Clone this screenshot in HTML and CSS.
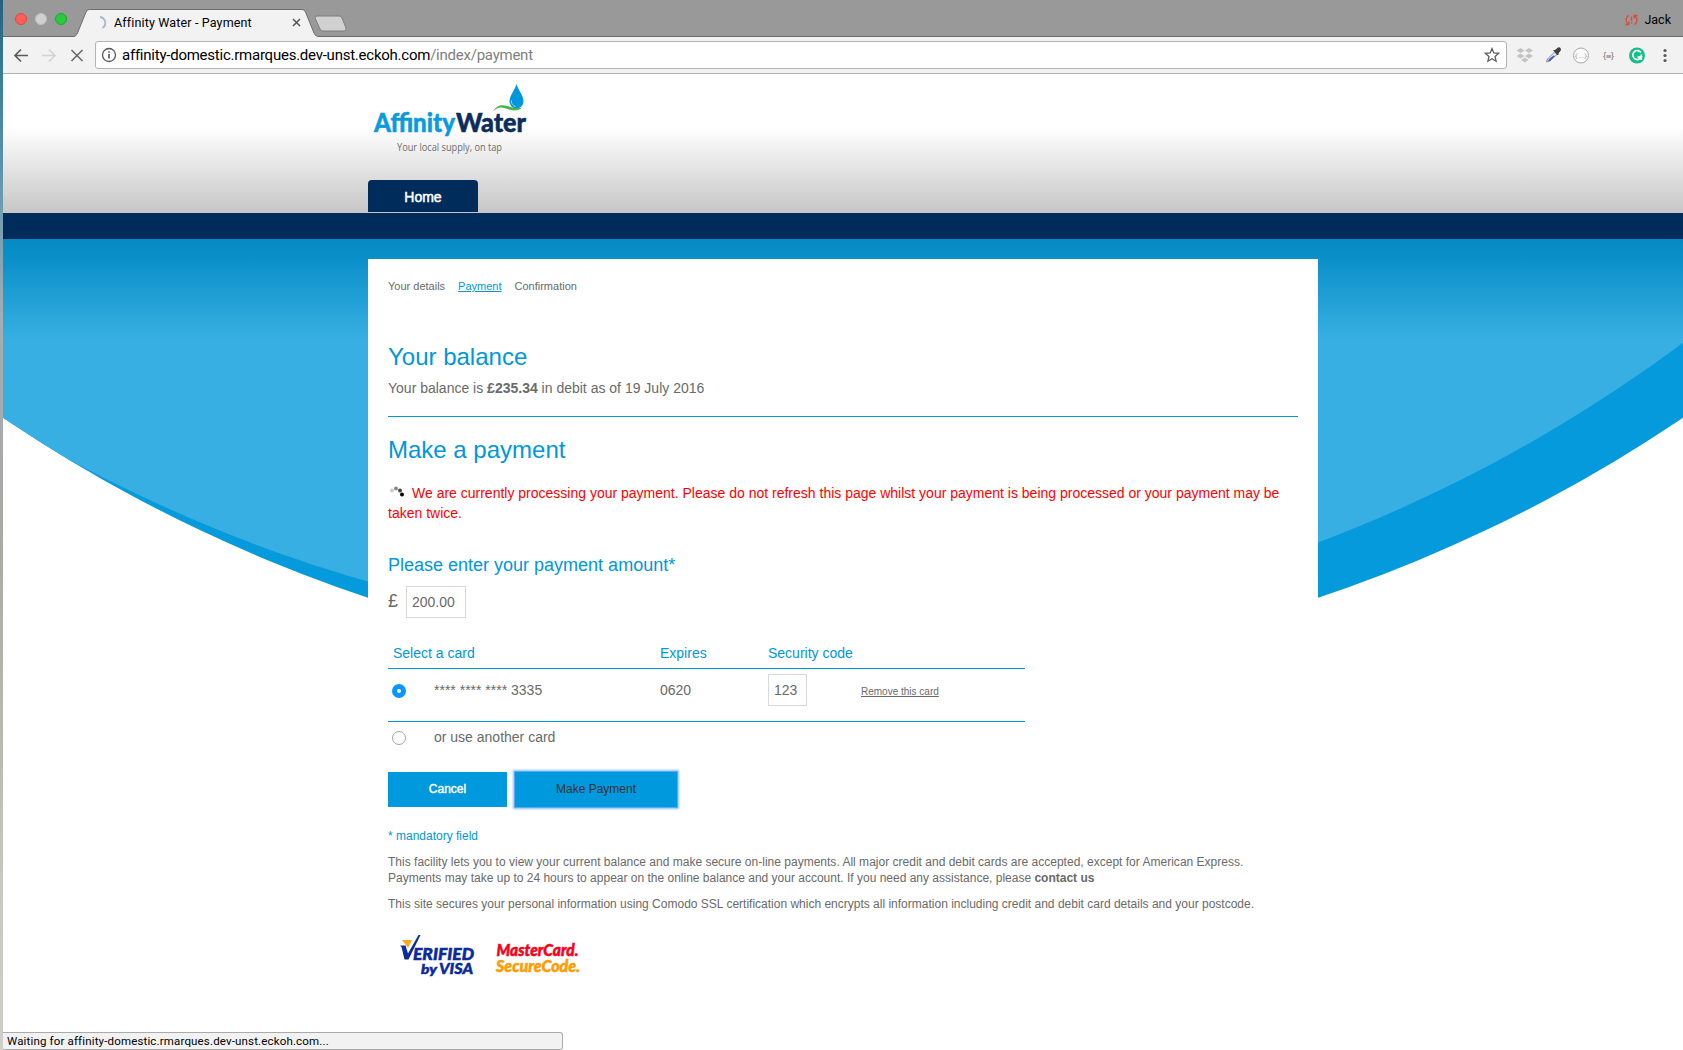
FILE: index.html
```html
<!DOCTYPE html>
<html lang="en">
<head>
<meta charset="utf-8">
<title>Affinity Water - Payment</title>
<link rel="stylesheet" href="styles.css">
</head>
<body>
<div class="desktop"></div>
<div class="window">
  <header class="tabstrip">
    <div class="lights"><i class="light red"></i><i class="light grey"></i><i class="light green"></i></div>
    <div class="tab">
      <svg class="tab-shape" width="246" height="28" viewBox="0 0 246 28"><path d="M0 27.5C2 27 2.500 26 3.500 24L12 3Q13 .5 15.500 .5H228Q230.500 .5 231.500 3L240 24Q241 27 244 27.500V28H0Z" fill="#f2f2f2"/><path d="M0 27.500C2 27 2.500 26 3.500 24L12 3Q13 .5 15.500 .5H228Q230.500 .5 231.500 3L240 24Q241 27 244 27.500" fill="none" stroke="#6c6c6c"/></svg>
      <svg class="tab-spinner" width="12" height="16" viewBox="0 0 12 16"><path d="M4 2A6 6 0 0 1 6.500 13" fill="none" stroke="#aab8cc" stroke-width="1.800"/></svg>
      <span class="tab-title">Affinity Water - Payment</span>
      <svg class="tab-close" width="9" height="9" viewBox="0 0 9 9"><path d="M1 1L8 8M8 1L1 8" stroke="#555" stroke-width="1.500"/></svg>
    </div>
    <svg class="new-tab" width="34" height="18" viewBox="0 0 34 18"><path d="M3 1H25Q27 1 28 3L32 13Q33 16 30 16H9Q7 16 6 14L1 3Q.5 1 3 1Z" fill="#d1d1d1" stroke="#7d7d7d"/></svg>
    <div class="profile">
      <svg width="13" height="12" viewBox="0 0 13 12" fill="none" stroke="#db4a37" stroke-width="1.300"><path d="M4 1.500C.3 3 .3 8 3 10M.5 10.500H3.800V7.500M9 10.500C12.700 9 12.700 4 10 2M12.500 1.500H9.200V4.500M6.500 2.500V7M6.500 8V9.500"/></svg>
      <span>Jack</span>
    </div>
  </header>
  <nav class="toolbar">
    <svg width="92" height="36" viewBox="0 0 92 36" fill="none" stroke-width="1.700"><path d="M25 18.500H12.500M18 12.500L12 18.500L18 24.500" stroke="#5a5a5a"/><path d="M39 18.500H51.500M46 12.500L52 18.500L46 24.500" stroke="#d3d3d3"/><path d="M68.500 13L79.500 24M79.500 13L68.500 24" stroke="#666" stroke-width="1.500"/></svg>
    <div class="omnibox">
      <svg width="16" height="16" viewBox="0 0 16 16"><circle cx="8" cy="8" r="6.500" fill="none" stroke="#555" stroke-width="1.300"/><path d="M8 7V11.500M8 4.300V5.800" stroke="#555" stroke-width="1.600"/></svg>
      <span class="url">affinity-domestic.rmarques.dev-unst.eckoh.com<span class="path">/index/payment</span></span>
      <svg class="star" width="16" height="16" viewBox="0 0 16 16"><path d="M8 1.600L9.800 6L14.600 6.400L11 9.500L12.100 14.200L8 11.700L3.900 14.200L5 9.500L1.400 6.400L6.200 6Z" fill="none" stroke="#5c5c5c" stroke-width="1.300"/></svg>
    </div>
    <svg class="extensions" width="168" height="36" viewBox="0 0 168 36">
      <path d="M13.500 11L17.500 13.500L13.500 16L9.500 13.500ZM22 11L26 13.500L22 16L18 13.500ZM13.500 16.500L17.500 19L13.500 21.500L9.500 19ZM22 16.500L26 19L22 21.500L18 19ZM17.800 20.500L21.500 23L17.800 25.500L14 23Z" fill="#c3c3c3"/>
      <path d="M39.500 25L40.500 22L48 14.500L50.500 17L43 24Z" fill="#dce5f5" stroke="#777" stroke-width=".8"/><path d="M41 24L42 22L46.500 18.500L48 19L43 24Z" fill="#3266d4"/><path d="M46 13L48 13L51 10.500Q54 9.500 54 13L51.500 16.500V18L50 18Z" fill="#3d3d3d"/>
      <circle cx="74" cy="18.500" r="7.500" fill="#fafafa" stroke="#aaa"/><text x="74" y="21" class="tiny">{...}</text>
      <text x="101.500" y="21.500" class="brace" textLength="13">{≡}</text>
      <circle cx="130" cy="18.500" r="8" fill="#15c087"/><path d="M134 15.500A4.500 4.500 0 1 0 134.300 20H130.500M134.300 17.500V23" stroke="#fff" stroke-width="1.700" fill="none"/>
      <g fill="#5a5a5a"><circle cx="158" cy="13.500" r="1.600"/><circle cx="158" cy="18.500" r="1.600"/><circle cx="158" cy="23.500" r="1.600"/></g>
    </svg>
  </nav>
  <main class="viewport">
    <div class="masthead">
      <svg class="brand" width="170" height="80" viewBox="0 0 170 80">
        <text x="6" y="52" class="brand-a" textLength="81" lengthAdjust="spacingAndGlyphs">Affinity</text><text x="88" y="52" class="brand-b" textLength="70" lengthAdjust="spacingAndGlyphs">Water</text>
        <path d="M148.500 4C146.500 11 141.500 15 141.500 21.500A7 7 0 0 0 155.500 21.500C155.500 15 150.500 11 148.500 4Z" fill="#0097dc"/>
        <path d="M143.500 20.500A5.500 5.500 0 0 0 147.500 26.500" fill="none" stroke="#9ed8f3"/>
        <path d="M125 31.500C133 18 143 31 154.500 27.500C147 34 138 27.500 133 27.500Q129 27.500 125 31.500Z" fill="#45b649"/>
        <text x="29" y="71" class="tagline" textLength="105" lengthAdjust="spacingAndGlyphs">Your local supply, on tap</text>
      </svg>
      <a class="home">Home</a>
    </div>
    <div class="navbar"></div>
    <div class="stage">
      <svg class="swoosh" width="1680" height="370" viewBox="3 239 1680 370">
        <defs>
          <clipPath id="bowl"><circle cx="843" cy="-825.600" r="1500.500"/></clipPath>
          <linearGradient id="shade" gradientUnits="userSpaceOnUse" x1="0" y1="239" x2="0" y2="344"><stop offset="0" stop-color="#068ac4"/><stop offset=".2" stop-color="#0c90ca"/><stop offset=".46" stop-color="#1a9bd2"/><stop offset=".75" stop-color="#2ba7dc"/><stop offset=".93" stop-color="#36aee2"/><stop offset="1" stop-color="#38afe2"/></linearGradient>
        </defs>
        <g clip-path="url(#bowl)"><rect x="3" y="239" width="1680" height="370" fill="#059adc"/><circle cx="784.300" cy="-865" r="1505.400" fill="url(#shade)"/></g>
      </svg>
      <section class="panel">
        <div class="crumbs"><span>Your details</span><a>Payment</a><span>Confirmation</span></div>
        <h2 class="title first">Your balance</h2>
        <p class="balance">Your balance is <b>£235.34</b> in debit as of 19 July 2016</p>
        <h2 class="title">Make a payment</h2>
        <p class="warning"><svg width="24" height="14" viewBox="0 0 24 14"><circle cx="4" cy="5.500" r="2" fill="#ccc"/><circle cx="8" cy="3.500" r="2" fill="#888"/><circle cx="12" cy="5.500" r="2" fill="#444"/><circle cx="14" cy="9.500" r="2" fill="#000"/></svg>We are currently processing your payment. Please do not refresh this page whilst your payment is being processed or your payment may be taken twice.</p>
        <h3 class="subtitle">Please enter your payment amount*</h3>
        <div class="amount"><span class="pound">£</span><span class="field wide">200.00</span></div>
        <div class="cards">
          <div class="cards-head"><span>Select a card</span><span>Expires</span><span>Security code</span></div>
          <div class="cards-row saved"><i class="radio on"></i><span>**** **** **** 3335</span><span>0620</span><span class="field">123</span><a class="remove">Remove this card</a></div>
          <div class="cards-row other"><i class="radio"></i><span>or use another card</span></div>
        </div>
        <div class="buttons"><span class="button cancel">Cancel</span><span class="button pay">Make Payment</span></div>
        <p class="note mandatory">* mandatory field</p>
        <p class="note"><span class="loose">This facility lets you to view your current balance and make secure on-line payments. All major credit and debit cards are accepted, except for American Express.</span><br>Payments may take up to 24 hours to appear on the online balance and your account. If you need any assistance, please <b>contact us</b></p>
        <p class="note">This site secures your personal information using Comodo SSL certification which encrypts all information including credit and debit card details and your postcode.</p>
        <svg class="schemes" width="240" height="60" viewBox="388 926 240 60">
          <path d="M402 940H412L408 948Z" fill="#fbaa19"/>
          <path d="M400 945.500H405.500L408 953.500L418.500 935H420.500L408.500 959.500H404.500L401.500 947Z" fill="#0b2a9b"/>
          <text x="413" y="959.500" class="visa" font-size="16" textLength="61" lengthAdjust="spacingAndGlyphs">ERIFIED</text>
          <text x="421" y="973.500" class="visa" font-size="14" textLength="16" lengthAdjust="spacingAndGlyphs">by</text>
          <text x="439" y="973.500" class="visa" font-size="15" textLength="34" lengthAdjust="spacingAndGlyphs">VISA</text>
          <text x="496.500" y="956" class="mc master" font-size="16.500" textLength="82" lengthAdjust="spacingAndGlyphs">MasterCard.</text>
          <text x="496" y="972" class="mc secure" font-size="16.500" textLength="84" lengthAdjust="spacingAndGlyphs">SecureCode.</text>
        </svg>
      </section>
    </div>
    <div class="status">Waiting for affinity-domestic.rmarques.dev-unst.eckoh.com...</div>
  </main>
</div>
</body>
</html>
```
FILE: styles.css
```css
* { box-sizing: border-box; }
body { margin: 0; width: 1683px; height: 1050px; display: flex; overflow: hidden; font-family: "Liberation Sans", Arial, sans-serif; background: #fff; }
svg { flex: none; display: block; }
h2, h3, p { margin: 0; font-weight: normal; }

.desktop { width: 3px; flex: none; background: linear-gradient(#24617f, #3d7f9c 8%, #6f9db0 20%, #a5adb0 30%, #a9a9a5 50%, #b9b9ae 70%, #c9c8c0 85%, #cfcec8); }
.window { flex: 1; display: flex; flex-direction: column; min-width: 0; }

/* Browser tab strip */
.tabstrip { height: 37px; flex: none; display: flex; align-items: flex-end; background: #999; border-bottom: 1px solid #6c6c6c; font-family: Roboto, sans-serif; color: #000; }
.lights { display: flex; gap: 8px; padding: 0 0 11px 12px; width: 71px; }
.light { width: 12px; height: 12px; border-radius: 50%; border: 1px solid #e2463f; background: #ff5f57; }
.light.grey { background: #d0d0d0; border-color: #c0c0c0; }
.light.green { background: #28c940; border-color: #1aab29; }
.tab { width: 242px; height: 28px; margin-bottom: -1px; position: relative; display: flex; align-items: center; }
.tab-shape { position: absolute; left: 0; top: 0; }
.tab-spinner, .tab-title, .tab-close { position: relative; }
.tab-spinner { margin-left: 22px; }
.tab-title { margin-left: 6px; width: 140px; white-space: nowrap; font-size: 12.500px; letter-spacing: .15px; line-height: 24px; padding-bottom: 1px; }
.tab-close { margin: 0 0 2px 38px; }
.new-tab { margin: 0 0 3px -2px; }
.profile { margin-left: auto; padding-right: 12px; display: flex; align-items: center; gap: 6px; font-size: 12.500px; line-height: 16px; padding-bottom: 8px; }

/* Address bar */
.toolbar { height: 37px; flex: none; display: flex; background: #f2f2f2; border-bottom: 1px solid #b0b0b0; }
.omnibox { width: 1412px; height: 28px; margin-top: 4px; display: flex; align-items: center; border: 1px solid #b3b3b3; border-radius: 3px; background: #fff; padding: 0 6px 0 5px; font-family: Roboto, sans-serif; font-size: 15px; white-space: nowrap; }
.url { margin-left: 5px; letter-spacing: -.24px; }
.path { color: #7f7f7f; }
.star { margin-left: auto; }
.tiny, .brace { font: 6px "DejaVu Sans", sans-serif; fill: #999; text-anchor: middle; }
.brace { font-size: 8px; fill: #777; }

/* Site header */
.viewport { flex: 1; position: relative; overflow: hidden; background: #fff; }
.masthead { height: 139px; padding-left: 365px; display: flex; flex-direction: column; align-items: flex-start; background: linear-gradient(#fff 38%, #c6c6c6 100%); }
.brand { height: 80px; margin-top: 6px; }
.brand-a, .brand-b { font: 900 26px Lato, sans-serif; fill: #0a9bdc; stroke: #0a9bdc; stroke-width: .5px; }
.brand-b { fill: #0b2d5c; stroke: #0b2d5c; }
.tagline { font: 10.500px "Open Sans", sans-serif; fill: #6d6d6d; }
.home { width: 110px; height: 32px; margin-top: 20px; border-radius: 4px 4px 0 0; background: #002c5b; color: #fff; font-size: 14px; line-height: 34px; text-align: center; -webkit-text-stroke: .5px #fff; }
.navbar { height: 26px; background: #002c5b; }
.stage { position: relative; padding: 20px 0 0 365px; }
.swoosh { position: absolute; left: 0; top: 0; }

/* Payment panel */
.panel { position: relative; width: 950px; height: 800px; padding: 19px 20px 0; background: #fff; color: #6a6a69; font-size: 14px; line-height: 20px; }
.crumbs { display: flex; gap: 13px; font-size: 11px; line-height: 16px; }
.crumbs a { color: #0097dc; text-decoration: underline; }
.title { margin-top: 19px; font-size: 24px; line-height: 28px; color: #0097dc; }
.title.first { margin-top: 49px; }
.balance { margin-top: 7px; padding-bottom: 18px; border-bottom: 1px solid #0097dc; }
.warning { margin-top: 19px; color: #f00; }
.warning svg { display: inline-block; vertical-align: -1px; }
.subtitle { margin-top: 31px; font-size: 18px; line-height: 22px; color: #0097dc; }
.amount { margin-top: 10px; display: flex; align-items: center; }
.pound { width: 18px; font-size: 18px; padding-bottom: 2px; }
.field { width: 39px; height: 32px; padding-left: 5px; border: 1px solid #d6dadb; line-height: 30px; }
.field.wide { width: 60px; }
.cards { width: 637px; margin-top: 25px; }
.cards-head { height: 26px; padding-left: 5px; display: grid; grid-template-columns: 267px 108px 1fr; color: #0097dc; border-bottom: 1px solid #0097dc; }
.cards-row { display: grid; grid-template-columns: 46px 226px 108px 93px 1fr; align-items: center; }
.saved { height: 53px; padding: 0 0 10px; border-bottom: 1px solid #0097dc; }
.other { height: 30px; }
.radio { width: 14px; height: 14px; margin: 2px 0 0 4px; border: 1px solid #a5a5a5; border-radius: 50%; background: #fff; }
.radio.on { border: 5px solid #0a95ff; }
.remove { padding-top: 3px; font-size: 10px; text-decoration: underline; }
.buttons { margin-top: 20px; display: flex; gap: 8px; }
.button { height: 35px; background: #0099de; font-size: 12px; line-height: 34px; text-align: center; }
.cancel { width: 119px; color: #fff; -webkit-text-stroke: .4px #fff; }
.pay { width: 162px; color: #333; box-shadow: 0 0 0 1px #5aa9f5, 0 0 2px 2px #8cc1f7; }
.note { margin-top: 10px; font-size: 12px; line-height: 16px; white-space: nowrap; }
.loose { letter-spacing: .01px; }
.mandatory { margin-top: 21px; color: #0097dc; }
.schemes { margin-top: 14px; overflow: visible; }
.visa, .mc { font-family: Lato, sans-serif; font-weight: 900; font-style: italic; stroke-width: .5px; }
.visa { fill: #0b2a9b; stroke: #0b2a9b; }
.master { fill: #f5021d; stroke: #f5021d; }
.secure { fill: #ff9c05; stroke: #ff9c05; }

.status { position: absolute; left: 0; bottom: 0; width: 560px; height: 18px; padding-left: 4px; border: 1px solid #aaa; border-left: 0; border-radius: 0 3px 3px 0; background: #f2f2f2; font: 11.500px/16px Roboto, sans-serif; letter-spacing: .16px; color: #000; }
```
